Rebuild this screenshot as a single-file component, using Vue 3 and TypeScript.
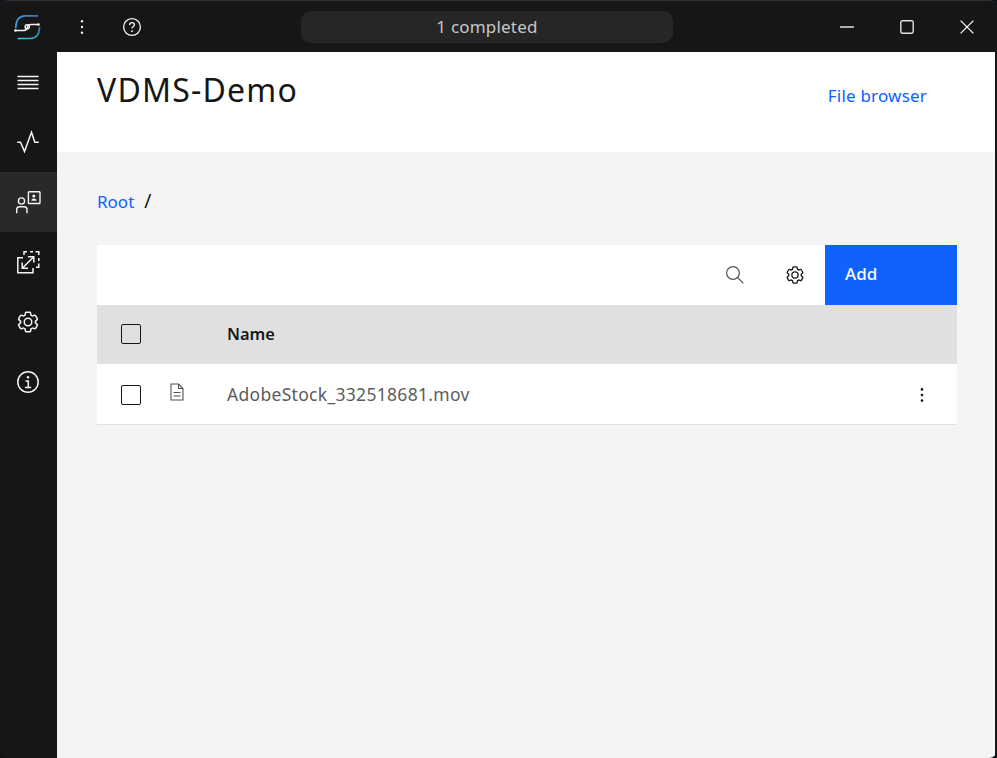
<script setup lang="ts">
interface Crumb {
  label: string
}

const crumbs: Crumb[] = [{ label: 'Root' }]
const files: string[] = ['AdobeStock_332518681.mov']
</script>

<template>
  <div class="app-window">
    <header class="title-bar">
      <div class="title-left">
        <div class="logo-slot">
          <svg class="logo" viewBox="0 0 28 28" fill="none" stroke-width="1.7" stroke-linecap="round">
            <defs>
              <linearGradient id="logo-top" x1="0" y1="0" x2="1" y2="0">
                <stop offset="0" stop-color="#2ba4ec" />
                <stop offset="1" stop-color="#4a6c9c" />
              </linearGradient>
              <linearGradient id="logo-bottom" x1="1" y1="0" x2="0" y2="0">
                <stop offset="0" stop-color="#2f86a8" />
                <stop offset="1" stop-color="#48d0e4" />
              </linearGradient>
            </defs>
            <path d="M1.8 14.5 C2 7.5 5 3 11 2.8 H23.5" stroke="url(#logo-top)" />
            <path d="M25.5 14.5 C25.3 21.5 22 25.5 16 25.5 H4.5" stroke="url(#logo-bottom)" />
            <path d="M1.5 17.5 H10 C12.5 17.5 13 15.5 13.6 13.8 C14.2 12.2 15 11.5 17 11.5 H24.5" stroke="#f4f4f4" stroke-width="1.5" />
            <circle cx="1.5" cy="17.5" r="1.3" fill="#f4f4f4" stroke="none" />
            <circle cx="24.5" cy="11.5" r="1.3" fill="#f4f4f4" stroke="none" />
            <circle cx="13.2" cy="13.8" r="2.1" stroke="#f4f4f4" stroke-width="1.4" />
          </svg>
        </div>
        <button class="bar-btn dots-btn" type="button">
          <svg viewBox="0 0 16 16" fill="#f4f4f4">
            <circle cx="8" cy="2.3" r="1.2" />
            <circle cx="8" cy="8" r="1.2" />
            <circle cx="8" cy="13.7" r="1.2" />
          </svg>
        </button>
        <button class="bar-btn help-btn" type="button">
          <svg viewBox="0 0 20 20" fill="none" stroke="#f4f4f4" stroke-width="1.3">
            <circle cx="10" cy="10" r="8.4" />
            <path d="M7.6 8 C7.6 6.5 8.7 5.6 10 5.6 C11.4 5.6 12.4 6.5 12.4 7.8 C12.4 9.6 10 9.6 10 11.6" />
            <circle cx="10" cy="14.2" r="0.9" fill="#f4f4f4" stroke="none" />
          </svg>
        </button>
      </div>
      <div class="status-pill">1 completed</div>
      <div class="window-controls">
        <button class="win-btn" type="button">
          <svg viewBox="0 0 14 14" fill="none" stroke="#e0e0e0" stroke-width="1.4"><path d="M0 7 H14" /></svg>
        </button>
        <button class="win-btn" type="button">
          <svg viewBox="0 0 14 14" fill="none" stroke="#e0e0e0" stroke-width="1.4"><rect x="0.8" y="0.8" width="12.4" height="12.4" rx="1.6" /></svg>
        </button>
        <button class="win-btn" type="button">
          <svg viewBox="0 0 14 14" fill="none" stroke="#f4f4f4" stroke-width="1.3"><path d="M0.6 0.6 L13.4 13.4 M13.4 0.6 L0.6 13.4" /></svg>
        </button>
      </div>
    </header>

    <div class="body-row">
      <nav class="side-nav">
        <div class="nav-item">
          <svg viewBox="0 0 24 24" fill="none" stroke="#f4f4f4" stroke-width="1.3">
            <path d="M1.5 6.5 H22.5 M1.5 10.5 H22.5 M1.5 14.5 H22.5 M1.5 18.5 H22.5" />
          </svg>
        </div>
        <div class="nav-item">
          <svg viewBox="0 0 24 24" fill="none" stroke="#f4f4f4" stroke-width="1.5">
            <path d="M1.2 12.2 H4.5 L8.5 21.5 L15.5 2.2 L18.8 12.2 H22.8" />
          </svg>
        </div>
        <div class="nav-item active">
          <svg viewBox="0 0 24 24" fill="none" stroke="#f4f4f4" stroke-width="1.4">
            <circle cx="5.5" cy="11" r="3.1" />
            <path d="M0.7 23.3 V19.7 C0.7 18 2 16.8 3.5 16.8 H8.2 C9.8 16.8 11 18 11 19.7 V23.3" />
            <rect x="12.4" y="1.7" width="11.6" height="11.8" rx="0.8" />
            <circle cx="17.8" cy="6" r="1.5" fill="#f4f4f4" stroke="none" />
            <path d="M15.3 10.7 C15.5 7.8 20.3 7.8 20.5 10.7 Z" fill="#f4f4f4" stroke="none" />
          </svg>
        </div>
        <div class="nav-item">
          <svg viewBox="0 0 24 24" fill="none" stroke="#f4f4f4" stroke-width="1.5">
            <path d="M7 7.7 H1.8 V22.7 H17 V18" />
            <path d="M8 5 V1.7 H11 M14 1.7 H17 M19.5 1.7 H22.8 V5 M22.8 8 V11 M22.8 13.5 V17.3 H20" />
            <path d="M6.2 18.3 L17.8 6.7 M12 6.7 H17.8 V12.5 M6.2 12.5 V18.3 H12" />
          </svg>
        </div>
        <div class="nav-item">
          <svg viewBox="0 0 32 32" fill="#f4f4f4">
            <path d="M27 16.76V15.24l1.92-1.68A2 2 0 0 0 29.3 11l-2.36-4a2 2 0 0 0-1.73-1 2 2 0 0 0-.64.1l-2.43.82a11.35 11.35 0 0 0-1.31-.75l-.51-2.52a2 2 0 0 0-2-1.61h-4.68a2 2 0 0 0-2 1.61l-.51 2.52a11.48 11.48 0 0 0-1.32.75l-2.38-.86A2 2 0 0 0 6.79 6a2 2 0 0 0-1.73 1L2.7 11a2 2 0 0 0 .41 2.51L5 15.24v1.52l-1.89 1.68A2 2 0 0 0 2.7 21l2.36 4a2 2 0 0 0 1.73 1 2 2 0 0 0 .64-.1l2.43-.82a11.35 11.35 0 0 0 1.31.75l.51 2.52a2 2 0 0 0 2 1.61h4.72a2 2 0 0 0 2-1.61l.51-2.52a11.48 11.48 0 0 0 1.32-.75l2.42.82a2 2 0 0 0 .64.1 2 2 0 0 0 1.73-1l2.28-4a2 2 0 0 0-.41-2.51ZM25.21 24l-3.43-1.16a8.86 8.86 0 0 1-2.71 1.57L18.36 28h-4.72l-.71-3.55a9.36 9.36 0 0 1-2.7-1.57L6.79 24l-2.36-4 2.72-2.4a8.9 8.9 0 0 1 0-3.13L4.43 12l2.36-4 3.43 1.16a8.86 8.86 0 0 1 2.71-1.57L13.64 4h4.72l.71 3.55a9.36 9.36 0 0 1 2.7 1.57L25.21 8l2.36 4-2.72 2.4a8.9 8.9 0 0 1 0 3.13L27.57 20Z" />
            <path d="M16 22a6 6 0 1 1 6-6 5.94 5.94 0 0 1-6 6Zm0-10a3.91 3.91 0 0 0-4 4 3.91 3.91 0 0 0 4 4 3.91 3.91 0 0 0 4-4 3.91 3.91 0 0 0-4-4Z" />
          </svg>
        </div>
        <div class="nav-item">
          <svg viewBox="0 0 24 24" fill="none" stroke="#f4f4f4" stroke-width="1.5">
            <circle cx="12" cy="12" r="10.2" />
            <circle cx="12" cy="7.2" r="1.2" fill="#f4f4f4" stroke="none" />
            <path d="M9.5 11 H12.3 V17.2 M9 17.4 H15.2" />
          </svg>
        </div>
      </nav>

      <main class="content">
        <section class="page-head">
          <h1 class="page-title">VDMS-Demo</h1>
          <a class="head-link">File browser</a>
        </section>

        <section class="page-body">
          <div class="breadcrumb">
            <template v-for="crumb in crumbs" :key="crumb.label">
              <a class="crumb-link">{{ crumb.label }}</a>
              <span class="crumb-sep">/</span>
            </template>
          </div>

          <div class="table-wrap">
            <div class="toolbar">
              <button class="tool-btn" type="button">
                <svg viewBox="0 0 20 20" fill="none" stroke="#525252" stroke-width="1.2">
                  <circle cx="8" cy="8" r="6.4" />
                  <path d="M12.7 12.7 L18.4 18.4" />
                </svg>
              </button>
              <button class="tool-btn" type="button">
                <svg viewBox="0 0 32 32" fill="#161616">
                  <path d="M27 16.76V15.24l1.92-1.68A2 2 0 0 0 29.3 11l-2.36-4a2 2 0 0 0-1.73-1 2 2 0 0 0-.64.1l-2.43.82a11.35 11.35 0 0 0-1.31-.75l-.51-2.52a2 2 0 0 0-2-1.61h-4.68a2 2 0 0 0-2 1.61l-.51 2.52a11.48 11.48 0 0 0-1.32.75l-2.38-.86A2 2 0 0 0 6.79 6a2 2 0 0 0-1.73 1L2.7 11a2 2 0 0 0 .41 2.51L5 15.24v1.52l-1.89 1.68A2 2 0 0 0 2.7 21l2.36 4a2 2 0 0 0 1.73 1 2 2 0 0 0 .64-.1l2.43-.82a11.35 11.35 0 0 0 1.31.75l.51 2.52a2 2 0 0 0 2 1.61h4.72a2 2 0 0 0 2-1.61l.51-2.52a11.48 11.48 0 0 0 1.32-.75l2.42.82a2 2 0 0 0 .64.1 2 2 0 0 0 1.73-1l2.28-4a2 2 0 0 0-.41-2.51ZM25.21 24l-3.43-1.16a8.86 8.86 0 0 1-2.71 1.57L18.36 28h-4.72l-.71-3.55a9.36 9.36 0 0 1-2.7-1.57L6.79 24l-2.36-4 2.72-2.4a8.9 8.9 0 0 1 0-3.13L4.43 12l2.36-4 3.43 1.16a8.86 8.86 0 0 1 2.71-1.57L13.64 4h4.72l.71 3.55a9.36 9.36 0 0 1 2.7 1.57L25.21 8l2.36 4-2.72 2.4a8.9 8.9 0 0 1 0 3.13L27.57 20Z" />
                  <path d="M16 22a6 6 0 1 1 6-6 5.94 5.94 0 0 1-6 6Zm0-10a3.91 3.91 0 0 0-4 4 3.91 3.91 0 0 0 4 4 3.91 3.91 0 0 0 4-4 3.91 3.91 0 0 0-4-4Z" />
                </svg>
              </button>
              <button class="add-btn" type="button">Add</button>
            </div>

            <div class="table-row table-head">
              <span class="check-cell"><span class="checkbox"></span></span>
              <span class="icon-cell"></span>
              <span class="name-cell">Name</span>
            </div>

            <div v-for="file in files" :key="file" class="table-row file-row">
              <span class="check-cell"><span class="checkbox"></span></span>
              <span class="icon-cell">
                <svg viewBox="0 0 14 18" fill="none" stroke="#525252" stroke-width="1.1">
                  <path d="M1 1 H8.5 L13 5.5 V17 H1 Z" />
                  <path d="M8.5 1 V5.5 H13" />
                  <path d="M3.5 9.5 H10.5 M3.5 13 H10.5" />
                </svg>
              </span>
              <span class="name-cell">{{ file }}</span>
              <button class="row-menu" type="button">
                <svg viewBox="0 0 16 16" fill="#161616">
                  <circle cx="8" cy="2.4" r="1.3" />
                  <circle cx="8" cy="8" r="1.3" />
                  <circle cx="8" cy="13.6" r="1.3" />
                </svg>
              </button>
            </div>
          </div>
        </section>
      </main>
    </div>
  </div>
</template>

<style>
html,
body {
  margin: 0;
  background: #10141a;
}
</style>

<style scoped>
.app-window {
  width: 997px;
  height: 758px;
  display: flex;
  flex-direction: column;
  background: #161616;
  font-family: 'Noto Sans', 'Open Sans', sans-serif;
  overflow: hidden;
  border-radius: 8px;
}

button {
  border: none;
  background: none;
  padding: 0;
  font-family: inherit;
}

.title-bar {
  height: 52px;
  flex: none;
  display: grid;
  grid-template-columns: 301px 372px 1fr;
  align-items: center;
  box-sizing: border-box;
  border-top: 1px solid #2a3038;
  border-radius: 8px 8px 0 0;
}

.title-left {
  display: flex;
  align-items: center;
}

.logo-slot {
  width: 57px;
  display: flex;
  justify-content: center;
}

.logo {
  width: 28px;
  height: 28px;
  margin-left: -2px;
}

.bar-btn {
  display: flex;
  align-items: center;
  justify-content: center;
}

.dots-btn {
  width: 16px;
  height: 16px;
  margin-left: 17px;
  margin-right: 32px;
}

.dots-btn svg {
  width: 16px;
  height: 16px;
}

.help-btn svg {
  width: 20px;
  height: 20px;
  display: block;
}

.status-pill {
  height: 32px;
  border-radius: 10px;
  background: #262626;
  color: #c6c6c6;
  font-size: 17px;
  letter-spacing: 0.2px;
  line-height: 32px;
  text-align: center;
}

.window-controls {
  display: flex;
  justify-content: flex-end;
}

.win-btn {
  width: 60px;
  height: 30px;
  display: flex;
  align-items: center;
  justify-content: center;
}

.win-btn svg {
  width: 14px;
  height: 14px;
}

.body-row {
  flex: 1;
  display: flex;
  min-height: 0;
  padding-right: 2px;
}

.side-nav {
  width: 57px;
  flex: none;
  display: flex;
  flex-direction: column;
}

.nav-item {
  height: 60px;
  display: flex;
  align-items: center;
  justify-content: center;
}

.nav-item svg {
  width: 24px;
  height: 24px;
  margin-left: -2px;
  overflow: visible;
}

.nav-item.active {
  background: #292929;
}

.content {
  flex: 1;
  display: flex;
  flex-direction: column;
  background: #f4f4f4;
  min-width: 0;
}

.page-head {
  height: 100px;
  flex: none;
  display: flex;
  justify-content: space-between;
  background: #fff;
  padding: 0 68px 0 40px;
}

.page-title {
  margin: 18px 0 0;
  font-size: 32px;
  font-weight: 400;
  letter-spacing: 1.2px;
  line-height: 40px;
  color: #161616;
}

.head-link {
  margin-top: 33px;
  font-size: 17px;
  letter-spacing: 0.2px;
  line-height: 22px;
  color: #0f62fe;
}

.page-body {
  flex: 1;
  padding: 37px 38px 0 40px;
}

.breadcrumb {
  height: 24px;
  display: flex;
  align-items: center;
  gap: 10px;
  font-size: 17px;
}

.crumb-link {
  color: #0f62fe;
}

.crumb-sep {
  color: #161616;
  font-size: 19px;
}

.table-wrap {
  margin-top: 32px;
  background: #fff;
}

.toolbar {
  height: 60px;
  display: flex;
  justify-content: flex-end;
  align-items: stretch;
}

.tool-btn {
  width: 60px;
  display: flex;
  align-items: center;
  justify-content: center;
}

.tool-btn svg {
  width: 20px;
  height: 20px;
}

.add-btn {
  width: 132px;
  background: #0f62fe;
  color: #fff;
  font-size: 17px;
  font-weight: 500;
  text-align: left;
  padding: 0 0 3px 20px;
}

.table-row {
  display: flex;
  align-items: center;
}

.table-head {
  height: 59px;
  background: #e0e0e0;
  color: #161616;
  font-size: 16.4px;
  font-weight: 600;
}

.table-head .name-cell {
  margin-top: -3px;
}

.table-head .checkbox {
  margin-top: -1px;
}

.file-row {
  height: 61px;
  box-sizing: border-box;
  border-bottom: 1px solid #e0e0e0;
  color: #5c5c5c;
  font-size: 17.5px;
  letter-spacing: 0.3px;
}

.file-row .name-cell {
  margin-top: -1px;
}

.file-row .checkbox {
  margin-top: 2px;
}

.check-cell {
  width: 68px;
  flex: none;
  display: flex;
  padding-left: 24px;
  box-sizing: border-box;
}

.checkbox {
  width: 20px;
  height: 20px;
  box-sizing: border-box;
  border: 1px solid #161616;
  border-radius: 2px;
  background: transparent;
}

.icon-cell {
  width: 62px;
  flex: none;
  display: flex;
  margin-top: -4px;
}

.icon-cell svg {
  width: 14px;
  height: 18px;
  margin-left: 5px;
}

.name-cell {
  flex: 1;
}

.row-menu {
  width: 16px;
  height: 16px;
  margin: 2px 27px 0 0;
}

.row-menu svg {
  width: 16px;
  height: 16px;
  display: block;
}
</style>
